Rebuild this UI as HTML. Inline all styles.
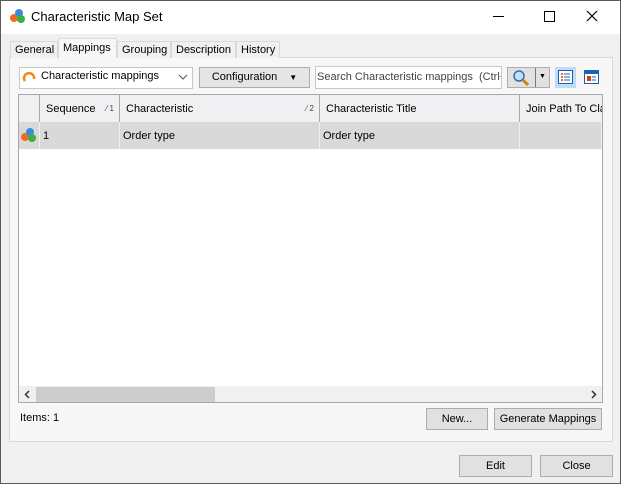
<!DOCTYPE html>
<html><head><style>
*{box-sizing:border-box;margin:0;padding:0}
body{width:621px;height:484px;overflow:hidden;font-family:"Liberation Sans",Tahoma,sans-serif;font-size:11px;color:#000;position:relative;background:#f0f0f0}
.a{position:absolute}
.win{left:0;top:0;width:621px;height:484px;border:1px solid #5a5a5a;background:#f0f0f0}
.title{left:1px;top:1px;width:619px;height:33px;background:#fff}
.btn{border:1px solid #adadad;background:#e1e1e1;text-align:center;line-height:19px}
.tab{top:41px;height:17px;border:1px solid #d9d9d9;border-bottom:none;background:#f0f0f0;line-height:16px;padding-left:4px}
.hd{top:95px;height:27px;background:#f0f0f2;border-right:1px solid #a8a8a8;line-height:28px;padding-left:6px}
.cell{top:122px;height:27px;background:#d9d9d9;border-right:1px solid #f0f0f0;line-height:28px;padding-left:3px}
</style></head><body>
<div class="a win"></div>
<div class="a title"></div>
<svg class="a" style="left:9px;top:8px" width="17" height="16"><circle cx="5" cy="10" r="4" fill="#f06a25"/><circle cx="10" cy="5" r="4" fill="#3a8be0"/><circle cx="12" cy="11" r="4" fill="#38b044"/></svg>
<div class="a" style="left:31px;top:9px;font-size:13px">Characteristic Map Set</div>
<div class="a" style="left:493px;top:16px;width:11px;height:1px;background:#000"></div>
<div class="a" style="left:544px;top:11px;width:11px;height:11px;border:1px solid #000"></div>
<svg class="a" style="left:586px;top:10px" width="12" height="12"><path d="M1 1L11 11M11 1L1 11" stroke="#000" stroke-width="1.2"/></svg>
<div class="a" style="left:9px;top:57px;width:604px;height:385px;border:1px solid #d9d9d9;background:#f7f7f7"></div>
<div class="a tab" style="left:10px;width:48px">General</div>
<div class="a tab" style="left:58px;top:38px;height:20px;width:59px;background:#f7f7f7;line-height:18px">Mappings</div>
<div class="a tab" style="left:117px;width:54px">Grouping</div>
<div class="a tab" style="left:171px;width:65px">Description</div>
<div class="a tab" style="left:236px;width:44px">History</div>
<div class="a" style="left:19px;top:67px;width:174px;height:22px;border:1px solid #c8c8c8;background:#fff"></div>
<svg class="a" style="left:22px;top:70px" width="15" height="15"><path d="M3 11 A5 5 0 1 1 12 9" stroke="#f08a10" stroke-width="2.5" fill="none"/></svg>
<div class="a" style="left:41px;top:70px">Characteristic mappings</div>
<svg class="a" style="left:178px;top:74px" width="10" height="6"><path d="M1 1 L5 5 L9 1" stroke="#555" fill="none"/></svg>
<div class="a btn" style="left:199px;top:67px;width:111px;height:21px;background:#e5e5e5">Configuration<span style="font-size:8px;margin-left:12px">▼</span></div>
<div class="a" style="left:315px;top:66px;width:187px;height:23px;border:1px solid #c8c8c8;background:#fff;color:#444;line-height:20px;padding-left:1px;white-space:nowrap;overflow:hidden">Search Characteristic mappings &nbsp;(Ctrl+</div>
<div class="a btn" style="left:507px;top:67px;width:43px;height:21px"></div>
<div class="a" style="left:535px;top:68px;width:1px;height:19px;background:#777"></div>
<svg class="a" style="left:512px;top:69px" width="18" height="18"><circle cx="7" cy="7" r="5" fill="#bfe0ff" stroke="#3a6ea8" stroke-width="1.5"/><path d="M11 11 L16 16" stroke="#c8860c" stroke-width="3"/></svg>
<div class="a" style="left:539px;top:73px;font-size:7px">▼</div>
<div class="a" style="left:555px;top:67px;width:21px;height:21px;background:#bfdcf7"></div>
<svg class="a" style="left:558px;top:70px" width="15" height="14"><rect x=".5" y=".5" width="14" height="13" fill="#fff" stroke="#1f5fb0"/><path d="M3 4h2M3 7h2M3 10h2" stroke="#d04010" stroke-width="1.5"/><path d="M6 4h6M6 7h6M6 10h6" stroke="#1f5fb0"/></svg>
<svg class="a" style="left:584px;top:70px" width="15" height="14"><rect x=".5" y=".5" width="14" height="13" fill="#fff" stroke="#1f5fb0"/><rect x="1" y="1" width="13" height="3" fill="#1f5fb0"/><rect x="3" y="6" width="4" height="5" fill="#d04010"/><path d="M8 7h4M8 10h4" stroke="#1f5fb0"/></svg>
<div class="a" style="left:18px;top:94px;width:585px;height:309px;border:1px solid #a8a8a8;background:#fff"></div>
<div class="a hd" style="left:19px;width:21px"></div>
<div class="a hd" style="left:40px;width:80px">Sequence<span style="position:absolute;right:5px;font-size:8px;color:#444">⁄ 1</span></div>
<div class="a hd" style="left:120px;width:200px">Characteristic<span style="position:absolute;right:5px;font-size:8px;color:#444">⁄ 2</span></div>
<div class="a hd" style="left:320px;width:200px">Characteristic Title</div>
<div class="a hd" style="left:520px;width:82px;border-right:none;white-space:nowrap;overflow:hidden">Join Path To Cla</div>
<div class="a cell" style="left:19px;width:21px"></div>
<svg class="a" style="left:20px;top:127px" width="17" height="16"><circle cx="5" cy="10" r="4" fill="#f06a25"/><circle cx="10" cy="5" r="4" fill="#3a8be0"/><circle cx="12" cy="11" r="4" fill="#38b044"/></svg>
<div class="a cell" style="left:40px;width:80px">1</div>
<div class="a cell" style="left:120px;width:200px">Order type</div>
<div class="a cell" style="left:320px;width:200px">Order type</div>
<div class="a cell" style="left:520px;width:82px"></div>
<div class="a" style="left:19px;top:386px;width:583px;height:16px;background:#f0f0f0"></div>
<div class="a" style="left:36px;top:387px;width:179px;height:15px;background:#cdcdcd"></div>
<svg class="a" style="left:24px;top:390px" width="6" height="9"><path d="M5 1L1.5 4.5L5 8" stroke="#333" stroke-width="1.5" fill="none"/></svg>
<svg class="a" style="left:591px;top:390px" width="6" height="9"><path d="M1 1L4.5 4.5L1 8" stroke="#333" stroke-width="1.5" fill="none"/></svg>
<div class="a" style="left:20px;top:412px">Items: 1</div>
<div class="a btn" style="left:426px;top:408px;width:62px;height:22px;line-height:20px">New...</div>
<div class="a btn" style="left:494px;top:408px;width:108px;height:22px;line-height:20px">Generate Mappings</div>
<div class="a btn" style="left:459px;top:455px;width:73px;height:22px;line-height:20px">Edit</div>
<div class="a btn" style="left:540px;top:455px;width:73px;height:22px;line-height:20px">Close</div>
</body></html>
